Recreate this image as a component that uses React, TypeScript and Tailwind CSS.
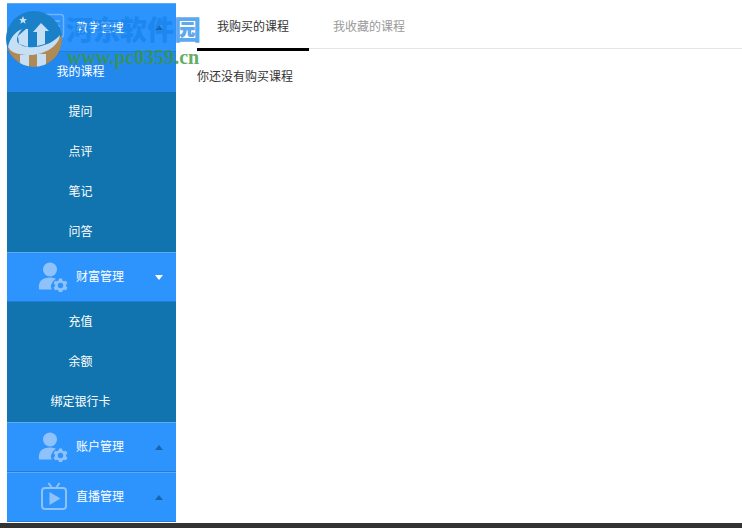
import { ReactNode } from 'react';

const PersonGear = () => (
  <svg width="30" height="30" viewBox="0 0 30 30" fill="#8fc1fb">
    <circle cx="12" cy="7.500" r="7" />
    <path d="M1 27c-.5-3 0-6 2-8.500C5 16.500 8 15.500 12 15.500c2.500 0 4.500.5 6 1.500-2 1-3.500 2.500-4 4.500-1.500 1.500-1.500 4 0 6H2.500C1.500 27.500 1 27.500 1 27z" />
    <path
      fillRule="evenodd"
      d="M21 16.500h3l.5 2 1.500.8 2-.6 1.500 2.600-1.500 1.400v1.600l1.500 1.400-1.500 2.600-2-.6-1.500.8-.5 2h-3l-.5-2-1.500-.8-2 .6-1.500-2.600 1.500-1.400v-1.600l-1.500-1.400 1.500-2.600 2 .6 1.500-.8zM22.500 20.800a2.700 2.700 0 100 5.400 2.700 2.700 0 000-5.400z"
    />
  </svg>
);

const TvIcon = () => (
  <svg width="28" height="30" viewBox="0 0 28 30" fill="none" stroke="#8fc1fb" strokeWidth="2">
    <rect x="2" y="6" width="24" height="21" rx="3" />
    <path d="M8.500 1l3.500 5M19.500 1L16 6" />
    <path d="M9.500 10v13l11-6.500z" fill="#8fc1fb" stroke="none" />
  </svg>
);

const DocIcon = () => (
  <svg width="24" height="26" viewBox="0 0 24 26" fill="none" stroke="#8fc1fb" strokeWidth="1.500">
    <rect x="1.500" y="1.500" width="21" height="23" rx="3" />
    <path d="M9 8h10M9 13h10M9 18h6" />
  </svg>
);

const Arrow = ({ down }: { down?: boolean }) =>
  down ? (
    <span className="h-0 w-0 border-x-4 border-t-[5px] border-x-transparent border-t-white" />
  ) : (
    <span className="h-0 w-0 border-x-4 border-b-[5px] border-x-transparent border-b-[#1766ad]" />
  );

const Header = ({
  label,
  icon,
  down,
  h = 'h-[50px]',
}: {
  label: string;
  icon?: ReactNode;
  down?: boolean;
  h?: string;
}) => (
  <div className={`flex ${h} items-center border-t border-b border-t-[#62a9f5] border-b-[#1f7ddb] bg-[#2d93fd] text-white`}>
    <div className="flex w-[69px] justify-end pr-[8px]">{icon}</div>
    <span className="flex-1 pb-[2px]">{label}</span>
    <div className="flex w-[22px] justify-start pl-[1px]">
      <Arrow down={down} />
    </div>
  </div>
);

const SubItem = ({ label, active }: { label: string; active?: boolean }) => (
  <div className={`flex h-10 items-center justify-center pr-[22px] pb-[2px] text-white ${active ? 'bg-[#2288ee]' : ''}`}>
    {label}
  </div>
);

export default function App() {
  return (
    <div
      className="relative flex h-[528px] w-[742px] flex-col overflow-hidden bg-white text-xs text-[#333]"
      style={{ fontFamily: '"Noto Sans CJK SC", "Liberation Sans", sans-serif' }}
    >
      <div className="flex flex-1 pl-[7px] pt-[3px]">
        <aside className="flex w-[169px] flex-col">
          <Header label="教学管理" h="h-[49px]" />
          <SubItem label="我的课程" active />
          <div className="bg-[#1174ae]">
            <SubItem label="提问" />
            <SubItem label="点评" />
            <SubItem label="笔记" />
            <SubItem label="问答" />
          </div>
          <Header label="财富管理" icon={<PersonGear />} down />
          <div className="bg-[#1174ae]">
            <SubItem label="充值" />
            <SubItem label="余额" />
            <SubItem label="绑定银行卡" />
          </div>
          <Header label="账户管理" icon={<PersonGear />} />
          <Header label="直播管理" icon={<TvIcon />} />
        </aside>

        <main className="flex-1 pl-[21px]">
          <div className="flex h-[46px] border-b border-[#e5e5e5]">
            <div className="flex h-[48px] w-[112px] items-center justify-center border-b-[3px] border-black text-[#333]">
              我购买的课程
            </div>
            <div className="flex h-[46px] w-[120px] items-center justify-center text-[#999]">我收藏的课程</div>
          </div>
          <p className="mt-[18px] leading-[18px]">你还没有购买课程</p>
        </main>
      </div>
      <div className="h-[5px] bg-[#333]" />

      {/* watermark over the page corner */}
      <div className="absolute left-[41px] top-[13px] opacity-70">
        <DocIcon />
      </div>
      <div className="absolute left-[6px] top-[11px] h-[56px] w-[56px] overflow-hidden rounded-full bg-[#1a80c8]">
        <svg width="56" height="56" viewBox="0 0 56 56">
          <path d="M0 36C10 44 45 40 56 24V56H0z" fill="#b08a55" />
          <path d="M2 36C4 27 9 21 16 18 11 24 10 29 12 32 19 39 42 38 54 24 53 35 38 44 24 44 13 44 5 42 2 36z" fill="#c6dff5" />
          <path d="M12 25 20 18 22 18V36L13 33z" fill="#c6dff5" />
          <path d="M27 21 35 12 43 20H39V33L31 35V21z" fill="#c6dff5" />
          <path d="M14 44h9v12h-9zM31 43h9v13h-9z" fill="#c6dff5" />
          <path d="M17 5l1.200 3H21l-2.200 1.800.8 3L17 11l-2.600 1.800.8-3L13 8h2.800z" fill="#c6dff5" />
        </svg>
      </div>
      <div className="absolute left-[66px] top-[11px] text-[27px] leading-[36px] font-black text-[#1482e9]/70">
        河东软件园
      </div>
      <div
        className="absolute left-[67px] top-[47px] text-[20px] leading-[20px] font-bold text-[#3c963c]/80"
        style={{ fontFamily: '"Liberation Serif", serif' }}
      >
        www.pc0359.cn
      </div>
    </div>
  );
}
